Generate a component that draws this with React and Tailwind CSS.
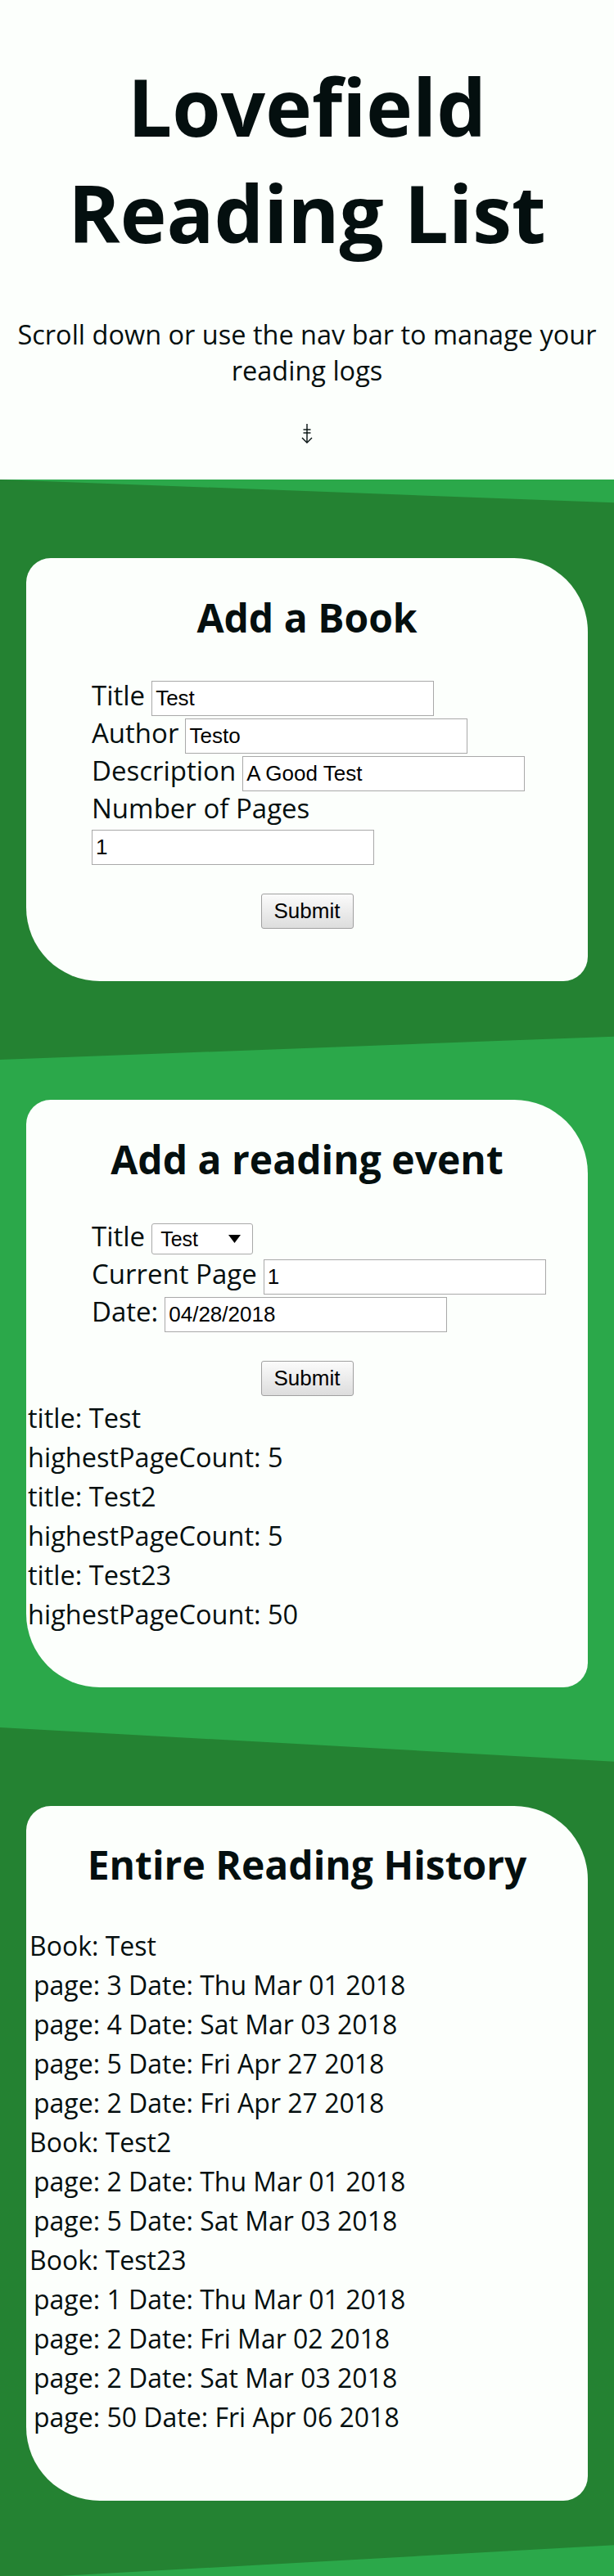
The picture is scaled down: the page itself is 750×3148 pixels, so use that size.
import React from "react";

const inputCls =
  "w-[345px] h-[43px] border border-[#a9a9a9] bg-white px-[4px] text-[26px] font-['Liberation_Sans',Arial,sans-serif] text-black outline-none";

function Field({ label, value, ml = "ml-[8px]" }) {
  return (
    <div className="flex items-baseline h-[46px]">
      <span className="text-[33px] leading-[46px] whitespace-nowrap">{label}</span>
      <input type="text" defaultValue={value} className={`${inputCls} ${ml}`} />
    </div>
  );
}

function SubmitButton() {
  return (
    <div className="flex justify-center">
      <button
        type="button"
        className="h-[43px] w-[113px] rounded-[3px] border border-[#a0a0a0] bg-linear-to-b from-[#fbfbfb] to-[#dddddd] text-[26px] font-['Liberation_Sans',Arial,sans-serif] text-black"
      >
        Submit
      </button>
    </div>
  );
}

function Card({ children, className = "" }) {
  return (
    <div className={`bg-[#fcfffc] rounded-[30px_90px_30px_90px] ${className}`}>{children}</div>
  );
}

function Heading({ children }) {
  return <h2 className="text-center text-[48px] leading-[56px] font-bold">{children}</h2>;
}

const history = [
  {
    book: "Test",
    pages: [
      "page: 3 Date: Thu Mar 01 2018",
      "page: 4 Date: Sat Mar 03 2018",
      "page: 5 Date: Fri Apr 27 2018",
      "page: 2 Date: Fri Apr 27 2018",
    ],
  },
  {
    book: "Test2",
    pages: ["page: 2 Date: Thu Mar 01 2018", "page: 5 Date: Sat Mar 03 2018"],
  },
  {
    book: "Test23",
    pages: [
      "page: 1 Date: Thu Mar 01 2018",
      "page: 2 Date: Fri Mar 02 2018",
      "page: 2 Date: Sat Mar 03 2018",
      "page: 50 Date: Fri Apr 06 2018",
    ],
  },
];

const summary = [
  ["title: Test", "highestPageCount: 5"],
  ["title: Test2", "highestPageCount: 5"],
  ["title: Test23", "highestPageCount: 50"],
];

export default function App() {
  return (
    <div className="w-[750px] font-['Open_Sans',sans-serif] text-[#040f0f] bg-[#fcfffc]">
      {/* Header */}
      <header className="h-[586px] flex flex-col items-center px-[10px] text-center">
        <h1 className="mt-[65px] text-[96px] leading-[130px] font-bold">
          Lovefield
          <br />
          Reading List
        </h1>
        <p className="mt-[62px] text-[32.5px] leading-[44px] font-normal">
          Scroll down or use the nav bar to manage your reading logs
        </p>
        <svg
          className="mt-[43px]"
          width="16"
          height="24"
          viewBox="0 0 16 24"
          fill="none"
          stroke="#040f0f"
          strokeWidth="1.4"
        >
          <line x1="8" y1="0" x2="8" y2="23" />
          <line x1="3.5" y1="7" x2="12.5" y2="7" />
          <line x1="3.5" y1="11" x2="12.5" y2="11" />
          <polyline points="2,17 8,23 14,17" />
        </svg>
      </header>

      <div className="bg-[#2ba84a]">
        {/* Section 1 */}
        <section className="bg-[#248232] [clip-path:polygon(0_0,100%_4%,100%_96%,0_100%)] px-[32px] py-[96px]">
          <Card className="pt-[45px] pb-[64px]">
            <Heading>Add a Book</Heading>
            <form className="mt-[44px]">
              <div className="pl-[80px]">
                <Field label="Title" value="Test" />
                <Field label="Author" value="Testo" />
                <Field label="Description" value="A Good Test" />
                <div className="h-[46px] text-[33px] leading-[46px]">Number of Pages</div>
                <input type="text" defaultValue="1" className={`${inputCls} mt-[3px] block`} />
              </div>
              <div className="mt-[35px]">
                <SubmitButton />
              </div>
            </form>
          </Card>
        </section>

        {/* Section 2 */}
        <section className="px-[32px] py-[49px]">
          <Card className="pt-[45px] pb-[65px]">
            <Heading>Add a reading event</Heading>
            <form className="mt-[43px]">
              <div className="pl-[80px]">
                <div className="flex items-baseline h-[46px]">
                  <span className="text-[33px] leading-[46px]">Title</span>
                  <div className="relative ml-[8px]">
                    <select
                      defaultValue="Test"
                      className="appearance-none w-[124px] h-[38px] border border-[#a9a9a9] rounded-[3px] bg-white pl-[10px] text-[25px] font-['Liberation_Sans',Arial,sans-serif] text-black outline-none"
                    >
                      <option>Test</option>
                      <option>Test2</option>
                      <option>Test23</option>
                    </select>
                    <svg
                      className="absolute right-[15px] top-[14px] pointer-events-none"
                      width="15"
                      height="10"
                      viewBox="0 0 15 10"
                    >
                      <polygon points="0,0 15,0 7.5,10" fill="#000" />
                    </svg>
                  </div>
                </div>
                <Field label="Current Page" value="1" />
                <Field label="Date:" value="04/28/2018" />
              </div>
              <div className="mt-[37px]">
                <SubmitButton />
              </div>
            </form>
            <div className="mt-[3px] pl-[2px] text-[32.5px] leading-[48px]">
              {summary.map(([t, h]) => (
                <React.Fragment key={t}>
                  <div>{t}</div>
                  <div>{h}</div>
                </React.Fragment>
              ))}
            </div>
          </Card>
        </section>

        {/* Section 3 */}
        <section className="bg-[#248232] [clip-path:polygon(0_0,100%_4%,100%_96%,0_100%)] px-[32px] py-[96px]">
          <Card className="pt-[44px] pb-[78px]">
            <Heading>Entire Reading History</Heading>
            <div className="mt-[47px] pl-[4px] text-[32px] leading-[48px]">
              {history.map((b) => (
                <div key={b.book}>
                  <div>Book: {b.book}</div>
                  {b.pages.map((p, i) => (
                    <div key={i} className="pl-[5px]">
                      {p}
                    </div>
                  ))}
                </div>
              ))}
            </div>
          </Card>
        </section>
      </div>
    </div>
  );
}
